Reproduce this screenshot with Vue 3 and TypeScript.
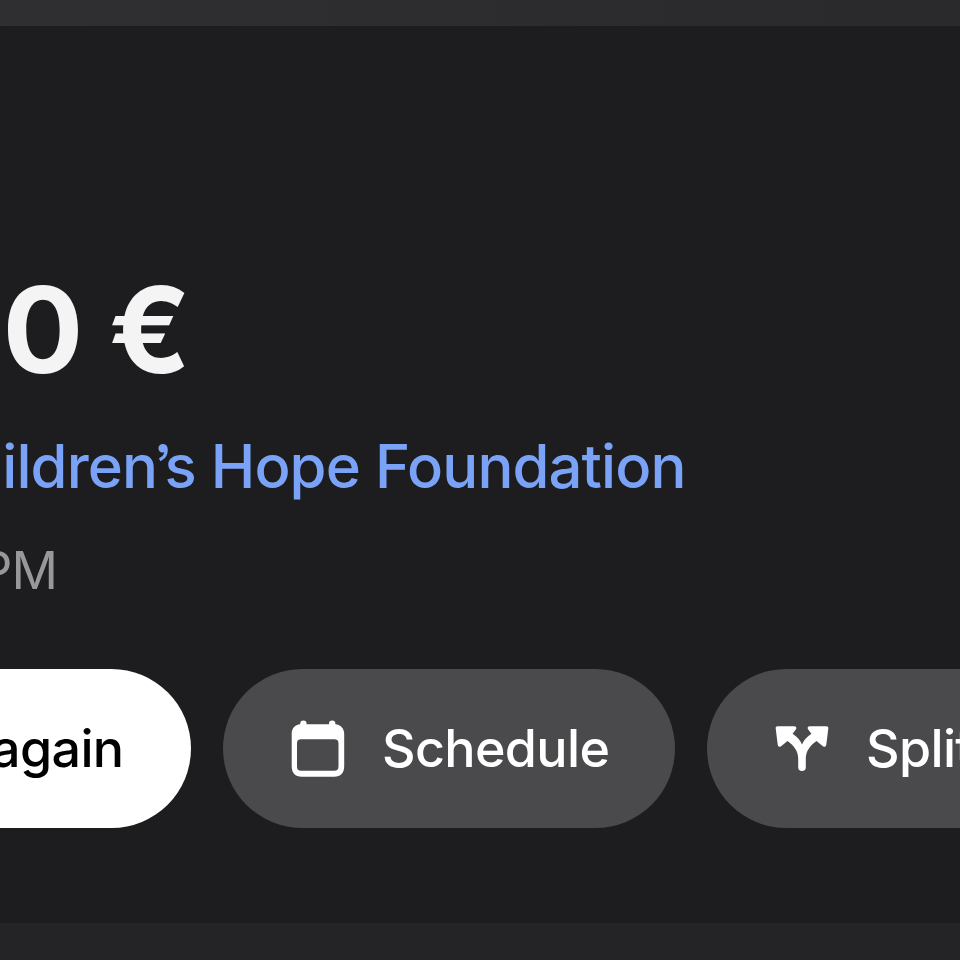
<script setup lang="ts">
interface Action {
  label: string
  icon: 'calendar' | 'split'
}

const amount = '0 €'
const time = 'PM'
const actions: Action[] = [
  { label: 'Schedule', icon: 'calendar' },
  { label: 'Split', icon: 'split' },
]
</script>

<template>
  <main class="screen">
    <div class="backdrop"></div>
    <section class="card">
      <h1 class="line amount">{{ amount }}</h1>
      <div class="line recipient"><span>hildren<span class="apostrophe">’</span>s Hope Foundation</span></div>
      <div class="line time">{{ time }}</div>
      <div class="actions">
        <button class="pill primary">again</button>
        <button v-for="a in actions" :key="a.icon" class="pill" :class="a.icon">
          <svg v-if="a.icon === 'calendar'" class="icon" viewBox="0 0 54 58">
            <path
              fill="#fff"
              fill-rule="evenodd"
              d="M9.200 4.200V3.700a3.200 3.200 0 0 1 6.400 0v.5h22.400V3.700a3.200 3.200 0 0 1 6.400 0v.5C49.700 4.700 53.200 8.500 53.200 13.700v32.500C53.200 52.700 49.700 56.700 43.200 56.700H10.700C4.200 56.700.7 52.700.7 46.200V13.700C.7 8.500 3.900 4.700 9.200 4.200zM10.200 19.200c-3 0-4.200 1.300-4.200 4.300v23c0 3 1.200 4.300 4.200 4.300h33c3 0 4.300-1.300 4.300-4.300v-23c0-3-1.300-4.300-4.300-4.300z"
            />
          </svg>
          <svg v-else class="icon" viewBox="0 0 54 58">
            <path
              fill="#fff"
              d="M2.700 6.300H19.300c1.900 0 2.600 1.700 1.500 3.200L17.600 13.700c4.800 3.200 7.700 6.600 9.400 10.800 1.700-4.200 4.600-7.600 9.400-10.800L33.200 9.500C32.100 8 32.800 6.300 34.700 6.300h16.600c1.500 0 2.200.9 2 2.300l-2 15.800c-.3 2.500-2.400 3-4 1.300l-5.800-4.700c-6.300 4.500-10.700 10-10.700 17.500v8.800a3.800 3.800 0 0 1-7.600 0v-8.800c0-7.500-4.400-13-10.700-17.500l-5.800 4.700c-1.600 1.700-3.700 1.200-4-1.300L.7 8.600C.5 7.200 1.200 6.300 2.700 6.300z"
            />
          </svg>
          <span>{{ a.label }}</span>
        </button>
      </div>
    </section>
  </main>
</template>

<style>
body {
  margin: 0;
  background: #242426;
}
</style>

<style scoped>
.screen {
  width: 960px;
  height: 960px;
  overflow: hidden;
  display: flex;
  flex-direction: column;
  background: #242426;
  font-family: Inter, 'Liberation Sans', sans-serif;
}
.backdrop {
  height: 26px;
  flex: none;
  background: linear-gradient(90deg, #2f2f31, #2a2a2c);
}
.card {
  box-sizing: border-box;
  height: 897px;
  flex: none;
  padding-top: 244px;
  background: #1d1d1f;
  overflow: hidden;
}
.line {
  display: flex;
  justify-content: flex-end;
  margin: 0;
  white-space: nowrap;
}
.amount {
  width: 189.5px;
  font-size: 120px;
  line-height: 120px;
  font-weight: 700;
  letter-spacing: -1.5px;
  color: #f4f4f4;
}
.recipient {
  width: 685.5px;
  margin-top: 46px;
  font-size: 59.8px;
  line-height: 60px;
  font-weight: 500;
  letter-spacing: -0.9px;
  font-feature-settings: 'ss03';
  color: #7aa3f7;
}
.apostrophe {
  margin: 0 -7px 0 -3px;
}
.time {
  width: 57px;
  margin-top: 48px;
  font-size: 51.5px;
  line-height: 52px;
  letter-spacing: -1px;
  color: #98989a;
}
.actions {
  display: flex;
  gap: 32px;
  margin-top: 73px;
}
.pill {
  box-sizing: border-box;
  flex: none;
  display: flex;
  align-items: center;
  height: 159px;
  padding: 0 66px 0 68px;
  border: 0;
  border-radius: 80px;
  background: #4a4a4c;
  color: #fff;
  font-family: inherit;
  font-size: 52px;
  line-height: 60px;
  font-weight: 500;
  letter-spacing: -0.65px;
  white-space: nowrap;
}
.primary {
  width: 191px;
  padding: 0 67.5px 0 0;
  justify-content: flex-end;
  border-radius: 0 80px 80px 0;
  background: #fff;
  color: #000;
}
.calendar {
  width: 452px;
}
.icon {
  width: 54px;
  height: 58px;
  flex: none;
  margin-right: 37px;
}
</style>
